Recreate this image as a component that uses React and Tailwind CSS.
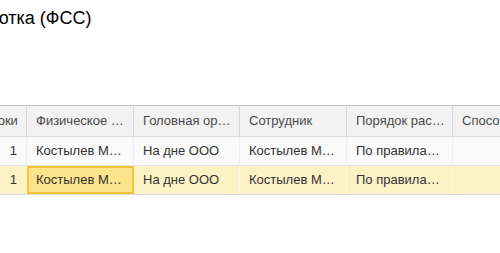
const COLS = [
  { key: 'n', title: 'N строки', w: 'w-[71px]', align: 'right' },
  { key: 'person', title: 'Физическое …', w: 'w-[107px]' },
  { key: 'org', title: 'Головная ор…', w: 'w-[106px]' },
  { key: 'emp', title: 'Сотрудник', w: 'w-[107px]' },
  { key: 'order', title: 'Порядок рас…', w: 'w-[106px]' },
  { key: 'way', title: 'Способ выплаты', w: 'w-[160px]' },
]

const ROWS = [
  { n: '1', person: 'Костылев М…', org: 'На дне ООО', emp: 'Костылев М…', order: 'По правила…', way: '' },
  { n: '1', person: 'Костылев М…', org: 'На дне ООО', emp: 'Костылев М…', order: 'По правила…', way: '' },
]

export default function App() {
  const selected = 1

  return (
    <div className="w-[500px] h-[253px] overflow-hidden bg-white font-['Liberation_Sans',Arial,sans-serif]">
      {/* Title */}
      <div className="pt-[7px] h-[105px]">
        <h1 className="-ml-[56px] text-[18px] leading-[22px] text-black whitespace-nowrap">Обработка (ФСС)</h1>
      </div>

      {/* Table */}
      <div className="-ml-[44px] w-[700px] border-t border-[#c4c4c4] text-[13px]">
        <div className="flex h-[31px] bg-[#f2f2f2] border-b border-[#dadada] text-[#4a4a4a]">
          {COLS.map(c => (
            <div key={c.key} className={`${c.w} shrink-0 border-r border-[#dadada] px-[9px] flex items-center whitespace-nowrap overflow-hidden`}>
              {c.title}
            </div>
          ))}
        </div>

        {ROWS.map((r, i) => {
          const isSel = i === selected
          return (
            <div key={i} className={`flex h-[29px] border-b ${isSel ? 'bg-[#fdf1c6] border-[#d9d9d9]' : 'bg-[#fafafa] border-[#e3e3e3]'} text-[#333333]`}>
              {COLS.map((c, ci) => {
                const active = isSel && ci === 1
                return (
                  <div
                    key={c.key}
                    className={`${c.w} shrink-0 border-r ${isSel ? 'border-[#fbf8ee]' : 'border-[#f0f0f0]'} flex items-center whitespace-nowrap overflow-hidden ${c.align === 'right' ? 'justify-end pr-[9px]' : 'pl-[9px]'} ${active ? 'bg-[#fde38c] outline-2 -outline-offset-2 outline-[#f5c232] ' : ''}`}
                  >
                    {r[c.key]}
                  </div>
                )
              })}
            </div>
          )
        })}
      </div>
    </div>
  )
}
